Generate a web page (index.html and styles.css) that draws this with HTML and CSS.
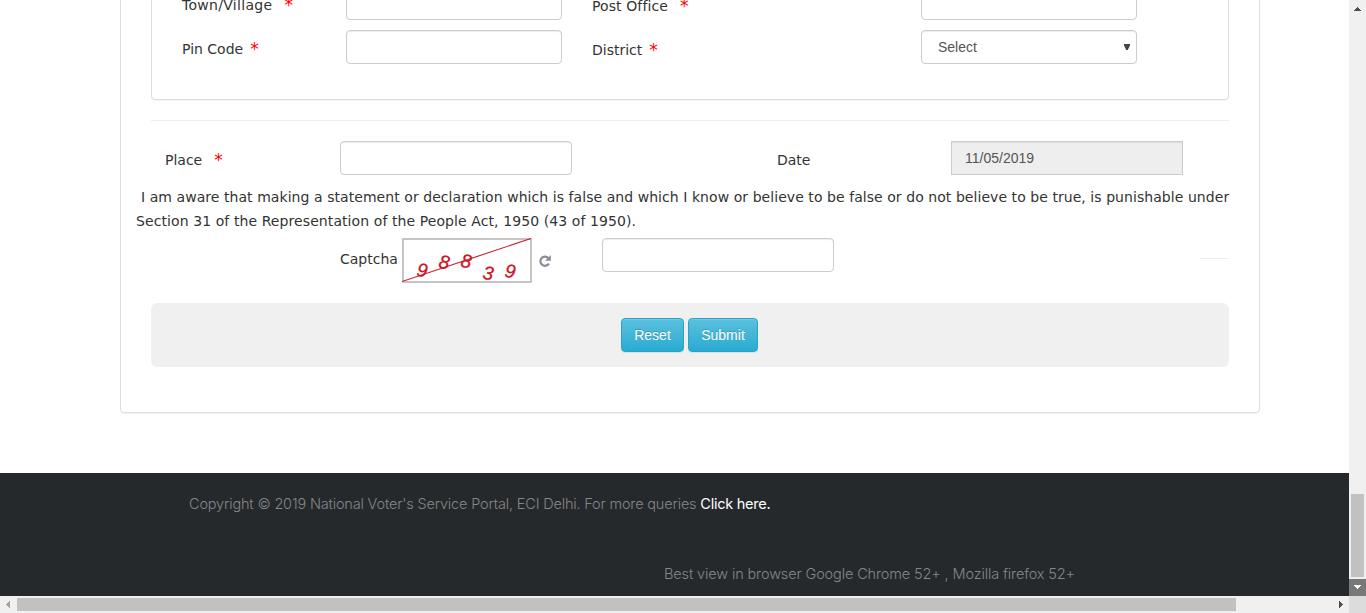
FILE: index.html
```html
<!DOCTYPE html>
<html lang="en">
<head>
<meta charset="utf-8">
<title>National Voter's Service Portal</title>
<link rel="stylesheet" href="styles.css">
</head>
<body>
<div class="window">
  <div class="page">
    <main class="panel">
      <section class="address">
        <label class="high"><span class="t-town">Town/Village</span> <i class="req gap-l">*</i></label>
        <div class="field"></div>
        <label><span class="t-post">Post Office</span> <i class="req gap-l">*</i></label>
        <div class="field"></div>
        <label class="high"><span>Pin Code</span> <i class="req gap-s">*</i></label>
        <div class="field"></div>
        <label><span>District</span> <i class="req gap-s">*</i></label>
        <div class="field select"><span>Select</span><svg width="6" height="7" viewBox="0 0 6 7"><path d="M0 0H6V1.500L4 5.500V6H2V5.500L0 1.500z" fill="#444"/></svg></div>
      </section>
      <hr class="rule">
      <section class="place">
        <label><span>Place</span> <i class="req gap-l">*</i></label>
        <div class="field"></div>
        <label class="date"><span>Date</span></label>
        <div class="field readonly">11/05/2019</div>
      </section>
      <p class="declaration"><span class="line first">I am aware that making a statement or declaration which is false and which I know or believe to be false or do not believe to be true, is punishable under</span><span class="line second">Section 31 of the Representation of the People Act, 1950 (43 of 1950).</span></p>
      <section class="captcha">
        <label>Captcha</label>
        <svg class="code" width="130" height="45" viewBox="0 0 130 45">
          <rect x="1" y="1" width="128" height="43" fill="#fff" stroke="#b3b3b3" stroke-width="1.5"/>
          <path d="M0 43.500L129 0.500" stroke="#c8202c" stroke-width="1.100"/>
          <g class="digits">
            <text x="15" y="38.500" transform="rotate(9 20 32)">9</text>
            <text x="37" y="30.500" transform="rotate(9 42 24)">8</text>
            <text x="59" y="29.500" transform="rotate(9 64 23)">8</text>
            <text x="81" y="41.500" transform="rotate(9 86 35)">3</text>
            <text x="103" y="39.500" transform="rotate(9 108 33)">9</text>
          </g>
        </svg>
        <svg class="refresh" width="12" height="12" viewBox="0 0 12 12"><path d="M9.900 8.600A4.600 4.600 0 1 1 9.300 3" fill="none" stroke="#8b8b95" stroke-width="2.200"/><path d="M11.800 0V5.800H6z" fill="#8b8b95"/></svg>
        <div class="field"></div>
        <hr class="stub">
      </section>
      <div class="actions"><button class="btn reset">Reset</button><button class="btn submit">Submit</button></div>
    </main>
    <footer class="footer">
      <p class="copy"><span class="c-text">Copyright © 2019 National Voter's Service Portal, ECI Delhi. For more queries</span> <a class="c-link">Click here.</a></p>
      <p class="best">Best view in browser Google Chrome 52+ , Mozilla firefox 52+</p>
    </footer>
  </div>
  <div class="vbar">
    <svg width="17" height="17"><path d="M5 11h7v-1h-1v-1h-1v-1h-1v-1h-1v1h-1v1h-1v1h-1z" fill="#4d4d4d"/></svg>
    <div class="vthumb"></div>
    <svg class="down" width="17" height="17"><path d="M5 6h7v1h-1v1h-1v1h-1v1h-1v-1h-1v-1h-1v-1h-1z" fill="#fff"/></svg>
  </div>
  <div class="hbar">
    <svg width="17" height="17"><path d="M10 5v7h-1v-1h-1v-1h-1v-1h-1v-1h1v-1h1v-1h1v-1z" fill="#a3a3a3"/></svg>
    <div class="hthumb"></div>
    <svg class="right" width="17" height="17"><path d="M7 5v7h1v-1h1v-1h1v-1h1v-1h-1v-1h-1v-1h-1v-1z" fill="#4d4d4d"/></svg>
  </div>
  <div class="corner"></div>
</div>
</body>
</html>
```
FILE: styles.css
```css
* { box-sizing: border-box; }
body { margin: 0; background: #fff; overflow: hidden; color: #333; font: 14px/24px "DejaVu Sans", Verdana, sans-serif; }
p, hr { margin: 0; border: 0; }
.window { display: grid; grid-template: 596px 17px / 1349px 17px; width: 1366px; height: 613px; overflow: hidden; }
.page { overflow: hidden; display: flex; flex-direction: column; }
.panel { flex: none; width: 1140px; height: 433px; margin: -20px 0 0 120px; padding: 0 30px; border: 1px solid #ddd; border-radius: 4px; box-shadow: 0 1px 1px rgba(0,0,0,.05); }
.address { display: grid; grid-template-columns: 164px 216px 359px 216px; grid-auto-rows: 34px; row-gap: 10px; height: 119px; padding: 4px 0 0 30px; border: 1px solid #ddd; border-radius: 4px; box-shadow: 0 1px 1px rgba(0,0,0,.05); }
.address label { padding: 8px 0 0 30px; }
.address label.high { padding: 7px 0 0; }
label { display: flex; align-items: flex-start; white-space: nowrap; }
.t-town { letter-spacing: .3px; }
.t-post { letter-spacing: .1px; }
.req { color: #f00; font-style: normal; font-size: 17px; line-height: 25px; }
.gap-l { margin-left: 12px; }
.gap-s { margin-left: 7px; }
.field { height: 34px; background: #fff; border: 1px solid #ccc; border-radius: 4px; box-shadow: inset 0 1px 1px rgba(0,0,0,.075); color: #555; font: 14px/32px "Liberation Sans", Arial, sans-serif; }
.select { display: flex; justify-content: space-between; align-items: center; padding: 0 6px 0 16px; }
.rule { height: 1px; margin: 20px 0; background: #eee; }
.place { display: grid; grid-template-columns: 175px 232px 379px 232px; padding-left: 14px; height: 34px; }
.place label { padding-top: 7px; }
.place .date { padding-left: 205px; }
.readonly { background: #eee; border-radius: 0; padding-left: 13px; }
.declaration { margin: 10px 0 0 -15px; height: 48px; }
.line { display: block; white-space: nowrap; }
.first { margin-left: 5px; letter-spacing: .058px; }
.second { letter-spacing: .087px; }
.captcha { display: flex; align-items: flex-start; height: 45px; margin-top: 5px; padding-left: 189px; }
.captcha label { width: 62px; padding-top: 9px; }
.digits { font: italic 19px "Liberation Sans", Arial, sans-serif; fill: #d0101e; stroke: #d0101e; stroke-width: .3px; }
.refresh { margin: 17px 51px 0 7px; }
.captcha .field { width: 232px; }
.stub { width: 29px; height: 1px; background: #eee; margin: 20px 0 0 auto; }
.actions { display: flex; justify-content: center; gap: 4px; height: 64px; margin-top: 20px; padding: 15px 1px 0 0; background: #f0f0f0; border-radius: 6px; }
.btn { height: 34px; padding: 0; border: 1px solid #28a4c9; border-radius: 4px; background: linear-gradient(#5bc0de, #2aabd2); box-shadow: inset 0 1px 0 rgba(255,255,255,.15), 0 1px 1px rgba(0,0,0,.075); color: #fff; font: 14px "Liberation Sans", Arial, sans-serif; text-shadow: 0 -1px 0 rgba(0,0,0,.2); }
.reset { width: 63px; }
.submit { width: 70px; }
.footer { flex: none; height: 123px; margin-top: 60px; padding-top: 19px; background: #25292c; color: #848688; font: 300 14.5px/24px Inter, "Liberation Sans", sans-serif; letter-spacing: -.17px; white-space: nowrap; }
.copy { padding-left: 189px; }
.c-link { color: #fff; font-weight: 400; letter-spacing: -.25px; }
.best { padding: 46px 0 0 664px; letter-spacing: -.13px; }
.vbar { background: #f0f0f0; display: flex; flex-direction: column; }
.vthumb { width: 13px; height: 83px; margin: 477px 0 2px 2px; background: #c1c1c1; }
.down { background: #787878; }
.hbar { background: #f0f0f0; display: flex; }
.hthumb { width: 1219px; height: 13px; margin-top: 2px; background: #c1c1c1; }
.right { margin-left: auto; }
.corner { background: #dcdcdc; }
```
